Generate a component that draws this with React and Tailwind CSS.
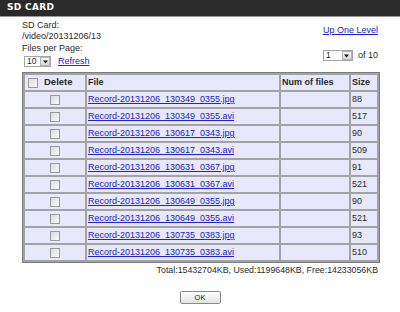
import React from "react";

const rows = [
  ["Record-20131206_130349_0355.jpg", "88"],
  ["Record-20131206_130349_0355.avi", "517"],
  ["Record-20131206_130617_0343.jpg", "90"],
  ["Record-20131206_130617_0343.avi", "509"],
  ["Record-20131206_130631_0367.jpg", "91"],
  ["Record-20131206_130631_0367.avi", "521"],
  ["Record-20131206_130649_0355.jpg", "90"],
  ["Record-20131206_130649_0355.avi", "521"],
  ["Record-20131206_130735_0383.jpg", "93"],
  ["Record-20131206_130735_0383.avi", "510"],
];

function Check() {
  return (
    <span className="inline-block w-[10px] h-[10px] border border-[#9a9a9a] bg-gradient-to-br from-[#dcdcdc] to-[#fafafa] align-middle"></span>
  );
}

function Select({ value, width }) {
  return (
    <div
      className="flex items-center h-[11px] border border-[#a5a5a5] bg-white"
      style={{ width }}
    >
      <span className="flex-1 pl-[2px] text-[8.5px] leading-[9px] text-[#222]">{value}</span>
      <span className="w-[10px] h-[9px] flex items-center justify-center border border-[#b5b5b5] bg-gradient-to-b from-[#fafafa] to-[#d8d8d8]">
        <svg width="5" height="4" viewBox="0 0 5 4">
          <path d="M0 0.5 L5 0.5 L2.5 3.5 Z" fill="#111" />
        </svg>
      </span>
    </div>
  );
}

export default function App() {
  return (
    <div
      className="w-[400px] h-[312px] bg-white text-[#2b2b2b] overflow-hidden"
      style={{ fontFamily: '"Liberation Sans", Arial, sans-serif' }}
    >
      <div className="h-[17px] bg-[#2a2a2a] border-b border-[#9a9a9a] flex items-center pl-[7px]">
        <span
          className="text-white font-bold text-[9px] tracking-[0.3px]"
          style={{ fontFamily: '"DejaVu Sans", Verdana, sans-serif' }}
        >
          SD CARD
        </span>
      </div>

      <div className="px-[22px] pt-[3px]">
        <div className="flex justify-between">
          <div className="flex flex-col text-[9px] leading-[11px]">
            <span>SD Card:</span>
            <span>/video/20131206/13</span>
            <span className="mt-[1px]">Files per Page:</span>
            <div className="flex items-center gap-[7px] mt-[2px] pl-[2px]">
              <Select value="10" width="27px" />
              <span className="text-[#2323c8] underline text-[9px]">Refresh</span>
            </div>
          </div>
          <div className="flex flex-col items-end text-[9px] leading-[11px]">
            <span className="mt-[5px] text-[#2323c8] underline">Up One Level</span>
            <div className="flex items-center gap-[5px] mt-[14px]">
              <Select value="1" width="30px" />
              <span>of 10</span>
            </div>
          </div>
        </div>

        <table className="mt-[5px] w-[356px] table-fixed border-separate border-spacing-[2px] bg-[#a3a3a3] border border-[#7c7c7c] text-[9px]">
          <colgroup>
            <col style={{ width: 60 }} />
            <col style={{ width: 192 }} />
            <col style={{ width: 68 }} />
            <col style={{ width: 26 }} />
          </colgroup>
          <thead>
            <tr className="h-[15px]">
              <th className="bg-[#e7e8fc] p-0 text-left font-bold text-[9.5px]">
                <div className="flex items-center pl-[3px] gap-[6px]">
                  <Check />
                  <span>Delete</span>
                </div>
              </th>
              <th className="bg-[#e7e8fc] p-0 pl-[1px] text-left font-bold">File</th>
              <th className="bg-[#e7e8fc] p-0 pl-[1px] text-left font-bold">Num of files</th>
              <th className="bg-[#e7e8fc] p-0 pl-[1px] text-left font-bold">Size</th>
            </tr>
          </thead>
          <tbody>
            {rows.map(([f, s]) => (
              <tr key={f} className="h-[15px]">
                <td className="bg-[#e7e8fc] p-0 text-center leading-[10px]">
                  <Check />
                </td>
                <td className="bg-[#e7e8fc] p-0 pl-[1px] leading-[11px] text-[#2323c8] underline whitespace-nowrap overflow-hidden">
                  {f}
                </td>
                <td className="bg-[#e7e8fc] p-0"></td>
                <td className="bg-[#e7e8fc] p-0 pl-[1px] leading-[11px]">{s}</td>
              </tr>
            ))}
          </tbody>
        </table>

        <div className="text-right text-[8.8px] leading-[11px] mt-[2px]">
          Total:15432704KB, Used:1199648KB, Free:14233056KB
        </div>

        <div className="flex justify-center mt-[15px]">
          <div className="w-[41px] h-[13px] rounded-[2px] border border-[#8a8a8a] bg-gradient-to-b from-[#ffffff] to-[#e2e2e2] flex items-center justify-center text-[7.5px] text-[#222]">
            OK
          </div>
        </div>
      </div>
    </div>
  );
}
